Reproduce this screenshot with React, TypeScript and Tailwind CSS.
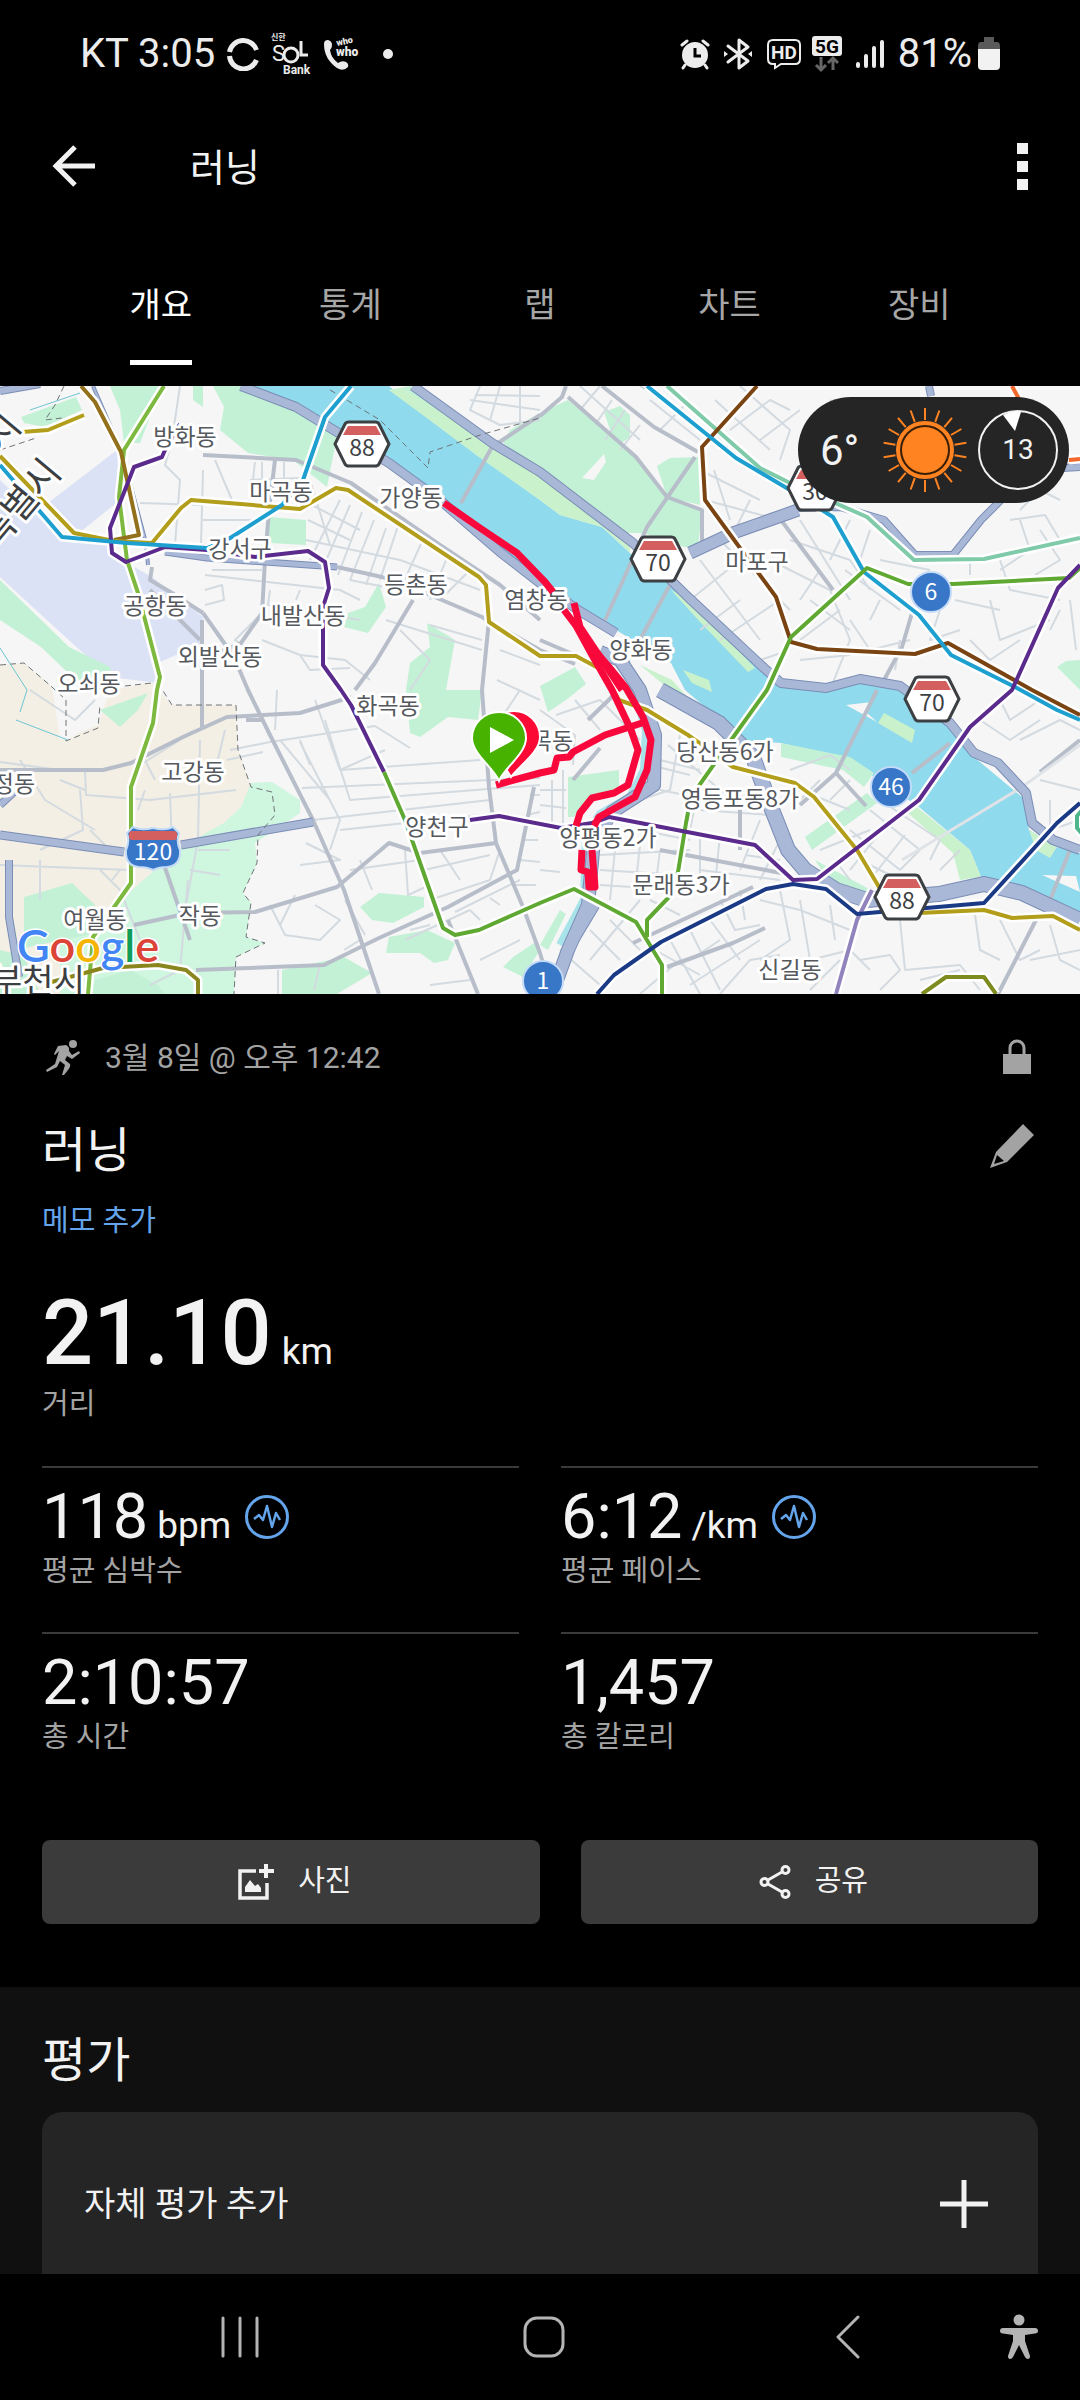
import type { ReactNode } from "react"

const tabs = ["개요", "통계", "랩", "차트", "장비"]

const stats = [
  { value: "118", unit: "bpm", label: "평균 심박수", chart: true },
  { value: "6:12", unit: "/km", label: "평균 페이스", chart: true },
  { value: "2:10:57", label: "총 시간" },
  { value: "1,457", label: "총 칼로리" },
]

const parks = [
  "110,386 162,386 140,443 124,443 120,410",
  "213,386 245,386 295,410 337,436 327,487 293,460 248,453 220,430 224,407",
  "193,386 203,386 203,407 193,400",
  "269,517 306,520 306,545 269,543",
  "379,583 386,607 368,633 344,627 348,613 365,607",
  "427,623 455,640 446,690 482,690 478,720 448,717 420,737 410,733 406,690 410,663 430,647",
  "0,580 69,647 110,667 117,690 86,690 41,647 0,620",
  "21,417 76,397 82,410 45,427 24,423",
  "389,390 410,386 500,445 540,468 540,500 480,458 430,420",
  "510,430 540,413 568,400 636,457 667,497 702,510 698,547 684,547 643,533 619,533 540,472 503,443",
  "604,412 620,406 630,415 630,437 616,447",
  "657,466 670,458 698,457 700,505 667,497",
  "1057,667 1066,661 1080,660 1080,690",
  "540,686 575,667 586,684 566,700 548,712",
  "568,777 619,770 619,787 585,803 574,817 568,817",
  "781,743 850,757 874,773 864,787 843,770 781,757",
  "805,837 867,793 877,803 812,850",
  "815,860 871,890 864,897 826,877",
  "24,897 72,883 95,905 112,930 24,948",
  "100,710 148,693 138,710 120,727",
  "93,994 95,980 130,970 158,985 165,994",
  "360,907 379,893 424,897 424,907 393,923 372,920",
  "389,937 427,930 455,943 448,960 434,963 420,953 386,953",
  "282,970 344,957 372,973 337,994 282,994",
  "513,957 534,943 540,950 523,977 503,967",
  "0,950 24,956 40,994 0,994",
  "540,945 560,910 566,914 548,950",
]

const expressways = [
  { w: 10, d: "M241 386L296 407L337 432L389 463L440 500L500 552L540 583L578 610L616 633" },
  { w: 14, d: "M600 652L620 660L640 690L655 735L654 785L612 812L594 840L588 905L568 950L552 994" },
  { w: 9, d: "M596 905L572 945" },
  { w: 10, d: "M413 386L492 443L540 472L633 543L688 597L764 668L781 683L826 688L860 679L900 686L950 723L974 753L998 763L1026 793L1032 823L1053 840L1080 850" },
  { w: 16, d: "M660 690L719 723L753 757L771 807L788 850L805 870L836 890L867 900L939 894L984 884L1022 893L1080 920" },
  { w: 13, d: "M690 553L733 533L798 510" },
  { w: 8, d: "M798 508L840 507L884 520L915 555L953 555L981 520L998 503L1030 470L1080 467" },
  { w: 9, d: "M0 835L124 852M181 845L313 822" },
  { w: 8, d: "M9 860L9 917L19 977M0 805L14 792" },
  { w: 4, d: "M93 386L122 453L146 543L148 565" },
  { w: 7, d: "M165 552L207 558L265 562L337 567" },
  { w: 8, d: "M929 386L931 396M0 391L40 384" },
]

const avenues = [
  "M203 455L296 460L351 483L440 545L500 585L540 620",
  "M275 460L269 510L265 560L262 613L241 643L220 652",
  "M203 613L234 657L248 690L269 733L313 820L344 890L379 994",
  "M202 620L202 727",
  "M152 567L150 580L172 593L203 613M150 590L200 640",
  "M337 567L382 577L430 595L482 617L540 650L575 664",
  "M413 600L375 663L355 690",
  "M489 620L482 690L489 787L496 843L523 907L540 953L552 994",
  "M0 770L103 770L131 763L183 737L227 717L300 713L351 697",
  "M134 925L189 913L255 912L337 887L389 843L420 853L496 843",
  "M196 970L324 965L379 938L448 907L517 870L534 787",
  "M448 920L478 994",
  "M540 416L562 397L566 386M568 397L636 457L667 497L702 510L702 545",
  "M602 386L654 427L698 452",
  "M695 457L647 527L602 627M671 583L636 647",
  "M540 415L492 447L461 503",
  "M781 520L833 590",
  "M877 690L836 773L800 805M836 773L866 806M912 613L902 647L884 680",
  "M950 743L912 773",
  "M660 850L781 873",
  "M633 943L753 887M667 967L733 943L765 928",
  "M998 994L1036 920M740 807L740 850",
  "M540 640L575 655M573 780L600 748M619 690L588 720",
  "M1080 740L1040 772M1070 850L1050 900",
  "M190 940L152 830M262 720L246 720",
]

const streets = [
  "M203 470L201 545L230 540M180 386L172 440L165 465L180 480L175 545",
  "M215 460L232 500L200 500M255 462L250 505M262 462L262 500M284 462L284 500M250 480L300 478",
  "M203 520L262 520M140 503L203 505M310 480L330 545M340 500L310 560M350 505L322 570M362 512L338 575M374 520L350 580M386 528L366 585",
  "M312 505L360 530M308 520L350 540M306 540L400 560L480 590M400 520L380 580M425 535L400 590L350 580M450 550L430 600M470 570L440 600",
  "M205 590L222 585L224 600L205 605M205 575L340 590L360 600M270 590L268 605L360 620M300 590L296 600M212 570L262 570",
  "M262 613L235 640L250 650M277 690L275 730M262 640L300 655L345 660L370 680M300 655L310 670L350 668",
  "M400 630L430 660L410 690M430 625L482 640M386 620L482 650M500 650L540 665M497 680L540 700M520 690L500 720",
  "M230 750L270 742L375 726L410 748M227 760L263 752M300 742L340 820L330 850M280 740L330 800M315 700L340 770L480 760M325 720L350 800L540 785",
  "M302 788L540 778M313 820L490 800M340 830L480 815M350 870L420 860M385 750L340 770M310 765L300 740M306 843L340 860L300 865",
  "M270 905L285 935L320 940L340 920L315 905M295 895L280 925M345 900L365 935M344 950L360 940M320 965L314 990M278 970L278 994",
  "M372 890L360 860M405 850L408 895L430 885L420 862M424 870L490 855M440 850L460 880M430 900L490 880L500 850",
  "M470 910L480 920M490 898L500 905M455 912L520 880M405 940L470 910M410 930L430 925M480 960L520 940M430 985L470 980",
  "M515 885L536 885M520 860L540 862M522 840L538 840M526 815L540 812M530 795L540 795M540 870L560 872",
  "M0 865L130 870M40 860L40 900M80 790L83 830L40 850M85 770L86 795L150 800L236 790M60 780L85 790M170 793L172 850M200 740L198 840L185 910",
  "M198 850L230 850M190 870L220 875M188 880L180 970L150 985M155 780L145 760M145 790L138 810M180 740L140 765M213 780L225 730",
  "M100 870L120 890L140 940M120 870L112 880M110 850L90 830M20 760L45 800L95 830M0 762L60 770M30 690L75 720L95 700",
  "M580 386L640 440M600 386L580 410M625 410L605 440M640 425L620 450M612 400L595 425M650 400L700 440M640 386L700 425L720 440",
  "M670 386L730 450M690 400L660 430M715 400L770 450M740 386L790 430L780 460M730 430L770 400L790 410M760 440L800 410M700 470L760 500",
  "M714 470L730 520M720 450L780 480M705 500L780 520M750 500L735 530M830 400L850 420M800 440L810 460",
  "M690 600L740 560L780 600L720 640M700 560L760 640M720 540L790 610M740 600L700 630M770 560L830 590L850 640L830 690M790 540L850 560L870 590",
  "M800 520L850 600M820 570L800 600M850 520L830 560M870 530L860 560M840 610L800 640M760 660L790 650M810 600L850 630",
  "M850 620L870 650L910 640M880 600L870 620M940 610L930 640L960 630M990 600L1000 640L1050 620M1000 560L1010 590L1060 600M1020 520L1030 550L1000 570",
  "M1040 530L1060 560L1035 575M1010 520L1045 515L1060 540M1060 500L1040 490L1020 510M900 640L895 670M1020 640L990 660L970 640M1060 610L1050 630",
  "M845 570L900 610M880 560L930 570M800 660L850 655M970 560L970 575M955 600L1000 610M1070 600L1076 650",
  "M540 710L575 735L573 765M556 715L600 700L640 740M545 740L555 750M575 700L600 730M540 790L566 790M552 780L552 830M563 770L563 830M540 805L566 808",
  "M655 720L660 760L700 770M680 735L670 790L640 800M668 745L720 790M700 780L690 830M650 765L690 775M660 790L685 795M640 830L690 840",
  "M600 855L690 850M600 870L680 875M615 850L610 900M640 845L635 890M660 850L655 890M600 885L680 890M700 830L700 880M720 835L715 885M680 855L770 870",
  "M700 810L770 815M710 790L760 800M760 820L740 870M780 840L760 880M745 855L780 860M700 870L780 880",
  "M790 770L830 755L850 770M800 790L850 810M820 780L800 800M850 780L830 800M820 850L870 830M850 830L900 870M870 810L920 850",
  "M890 820L850 870M905 835L870 880M920 850L900 870M860 860L900 880M880 800L940 840L930 860M835 860L850 880M960 850L940 870",
  "M590 960L640 900M600 985L560 950M620 960L590 930M640 950L610 920M670 940L700 994M690 930L720 990M710 920L740 960M640 994L680 960",
  "M690 960L720 940M720 994L750 960L780 955M680 915L650 900M720 900L735 930L760 925M740 890L745 920M690 985L760 940M655 950L700 975",
  "M760 900L800 910L850 930M780 890L790 940L760 960M800 900L810 960L850 950L870 970M830 905L835 940M860 960L890 955L900 970L880 990",
  "M900 920L905 970L960 965L980 990M975 915L980 950L1000 960M1000 920L1020 960L1040 950M1050 925L1060 960L1080 970M920 980L960 970M1030 960L1080 950M840 960L810 990",
  "M1000 700L1010 720L1040 700M1020 740L1060 720L1080 730M1040 780L1080 790M1050 800L1050 830L1080 820M980 720L1010 740L1040 720",
  "M470 400L540 410M480 386L470 410L500 425L540 420M500 386L490 420M520 386L520 425M475 395L540 396",
]

const transit = [
  { c: "#7db93f", d: "M164 386L124 450L119 497L127 560L138 593L160 677L157 690L153 723L131 787L131 883L110 913L93 937L88 994" },
  { c: "#93701b", d: "M81 386L95 402L121 452L139 535L114 540" },
  { c: "#b29e1a", d: "M22 432L48 430L84 415" },
  { c: "#b29e1a", d: "M0 456L74 533L114 541L152 543L181 508L191 500L300 509L336 488L348 490L479 577L486 585L489 622L540 656L576 656L602 670L619 700L647 710L688 735L733 767L795 783L814 797L857 850L879 887L919 913L984 910L1012 918L1053 916L1080 930" },
  { c: "#5a2b8c", d: "M180 424L165 450L162 457L134 467L110 528L112 553L126 562L165 547L207 550L255 557L308 551L325 562L329 588L323 607L323 665L341 690L351 705L384 772" },
  { c: "#1d9fd0", d: "M0 465L62 537L127 543L207 548L227 540L282 505L303 480L325 417L351 386" },
  { c: "#7fcaa8", d: "M667 386L760 468L790 483L867 517L914 560L984 559L1080 538" },
  { c: "#7a4412", d: "M757 386L702 447L705 500L740 548L776 597L791 642L817 649L915 654L948 643L1032 690L1080 715" },
  { c: "#1d9fd0", d: "M647 386L736 458L790 490L833 517L864 572L919 615L951 655L1015 687L1057 710L1080 720" },
  { c: "#5fa832", d: "M384 772L405 820L443 928L455 935L479 930L540 903L574 889L636 922L662 965L662 994" },
  { c: "#5fa832", d: "M1080 568L1069 578L953 584L908 584L867 568L791 637L767 690L729 743L691 797L686 823L678 872L669 897L647 920L647 937" },
  { c: "#5a2b8c", d: "M470 820L499 816L561 828L592 823L609 817L755 845L793 880L817 879L919 800L970 727L1012 690L1058 588L1080 565" },
  { c: "#9184bd", d: "M872 890L857 920L836 994" },
  { c: "#1b3a86", d: "M597 994L614 975L661 942L766 889L793 884L826 889L857 914L984 903L1057 823L1080 803" },
  { c: "#7d8b1f", d: "M922 994L946 977L984 977L996 994" },
  { c: "#8a861e", d: "M48 983L103 968L158 965L186 970L198 980L198 994" },
  { c: "#f0682a", d: "M1012 386L1019 399M1069 460L1080 459" },
  { c: "#4fb58a", d: "M1084 808L1077 816L1077 828L1084 836" },
]

const places = [
  { x: 185, y: 437, name: "방화동" },
  { x: 281, y: 492, name: "마곡동" },
  { x: 411, y: 498, name: "가양동" },
  { x: 240, y: 549, name: "강서구" },
  { x: 416, y: 585, name: "등촌동" },
  { x: 536, y: 600, name: "염창동" },
  { x: 155, y: 606, name: "공항동" },
  { x: 303, y: 616, name: "내발산동" },
  { x: 220, y: 657, name: "외발산동" },
  { x: 89, y: 684, name: "오쇠동" },
  { x: 388, y: 706, name: "화곡동" },
  { x: 193, y: 772, name: "고강동" },
  { x: 14, y: 784, name: "정동" },
  { x: 200, y: 916, name: "작동" },
  { x: 95, y: 920, name: "여월동" },
  { x: 437, y: 827, name: "양천구" },
  { x: 552, y: 741, name: "목동" },
  { x: 641, y: 650, name: "양화동" },
  { x: 757, y: 562, name: "마포구" },
  { x: 725, y: 752, name: "당산동6가" },
  { x: 740, y: 799, name: "영등포동8가" },
  { x: 608, y: 838, name: "양평동2가" },
  { x: 681, y: 885, name: "문래동3가" },
  { x: 790, y: 970, name: "신길동" },
]

const routeShields = [
  { x: 362, y: 444, n: "88" },
  { x: 658, y: 559, n: "70" },
  { x: 815, y: 488, n: "30" },
  { x: 932, y: 699, n: "70" },
  { x: 902, y: 897, n: "88" },
]

const roundShields = [
  { x: 931, y: 592, n: "6" },
  { x: 891, y: 787, n: "46" },
  { x: 543, y: 981, n: "1" },
]

function RouteMap() {
  return (
    <svg
      viewBox="0 386 1080 608"
      className="block w-full font-['Noto_Sans_CJK_KR',sans-serif]"
      role="img"
      aria-label="러닝 경로 지도"
    >
      <rect y="386" width="1080" height="608" fill="#f6f6f6" />
      <path d="M0 665L24 663L52 687L60 740L98 725L110 690L152 683L172 705L236 705L238 750L251 787L250 830L180 994H0Z" fill="#f4efe4" />
      <path d="M52 690L98 702L96 722L66 741L60 712Z" fill="#f6f6f6" />
      <path d="M0 480L62 540L107 543L127 563L152 577L203 617L203 643L158 663L158 683L110 677L72 643L0 577ZM117 450L120 500L79 533L48 503Z" fill="#dbe2f5" />
      <path
        d="M251 783L272 782L300 800L300 813L275 830L255 843L257 863L243 893L251 903L246 937L265 943L236 957L234 994H60L60 945L120 900L155 870L193 840L224 823L241 807Z"
        fill="#cff6df"
      />

      {/* Han river and the Anyang stream */}
      <path
        d="M254 386L389 386L430 420L480 457L540 500L560 515L602 527L630 553L688 597L753 663L781 683L826 688L860 679L905 690L953 730L974 757L1022 797L1029 830L1057 847L1080 853L1080 917L1022 893L981 877L970 850L919 807L874 777L850 760L781 743L733 740L712 713L685 690L671 663L616 630L574 607L540 580L480 532L420 484L331 426Z"
        fill="#8fdaec"
      />
      <path d="M620 640L634 690L646 730L644 770L630 797L600 814L586 835L584 900L560 945" fill="none" stroke="#a9e3ea" strokeWidth="8" />
      {parks.map((points) => (
        <polygon key={points} points={points} fill="#c3f1d6" />
      ))}
      <g fill="#c9f1cc">
        <path d="M671 590L690 600L755 668L748 672L700 622ZM683 670L709 680L712 692L692 683ZM884 713L915 730L912 743L878 723ZM640 665L672 680L690 700L670 690Z" />
        <path d="M912 803L970 850L981 877L960 880L953 853L908 813ZM389 390L402 388L540 476V500L470 450ZM540 476L560 490L630 545L630 553L602 527L560 515L540 500ZM1029 830L1057 847L1050 858L1036 850Z" />
      </g>
      <path d="M846 705L872 702L866 712L877 722ZM1042 875L1076 876L1080 892ZM582 478L604 454L606 462L594 480Z" fill="#f6f6f6" />

      <g fill="none" strokeLinejoin="round">
        <g stroke="#d3dae0" strokeWidth="2">
          {streets.map((d) => (
            <path key={d} d={d} />
          ))}
        </g>
        <g stroke="#b7beca" strokeWidth="4">
          {avenues.map((d) => (
            <path key={d} d={d} />
          ))}
        </g>
        <path d="M1080 745L1022 787L902 860" stroke="#dfe3e8" strokeWidth="3" />
        <g stroke="#7b8db5">
          {expressways.map(({ w, d }) => (
            <path key={d} d={d} strokeWidth={w} />
          ))}
        </g>
        <g stroke="#a9b8d7">
          {expressways.map(({ w, d }) => (
            <path key={d} d={d} strokeWidth={w - 2} />
          ))}
        </g>
        <g stroke="#6f7478" strokeWidth="1" strokeDasharray="6 4">
          <path d="M330 390L380 420L428 468L430 452L480 435L540 418M0 665L24 663L52 687L66 700L66 741L98 728L100 705" />
          <path d="M158 683L172 705L236 705L238 750L251 787L272 792L275 815L258 835L257 863L243 893L251 903L246 937L265 943L236 957L234 994" />
          <path d="M64 386L55 405L45 420L62 418M0 450L36 438M125 686L152 683" />
        </g>
        <path d="M30 410L80 393M0 648L27 690L20 712M16 720L68 740" stroke="#6cc5d3" strokeWidth="1" />
        <g stroke="#ffffff" strokeWidth="9">
          {transit.map(({ d }) => (
            <path key={d} d={d} />
          ))}
        </g>
        {transit.map(({ c, d }) => (
          <path key={d} d={d} stroke={c} strokeWidth="4" />
        ))}
      </g>

      {/* labels */}
      <g fontSize="23" textAnchor="middle" fill="#55595d" stroke="#ffffff" strokeWidth="6" strokeLinejoin="round" paintOrder="stroke">
        {places.map(({ x, y, name }) => (
          <text key={name} x={x} y={y + 8}>
            {name}
          </text>
        ))}
        <g fontSize="34" fill="#3c3f42">
          <text x="38" y="993">부천시</text>
          <text transform="translate(30 512) rotate(-50)" fontSize="37">특별시</text>
          <text transform="translate(12 440) rotate(-50)" fontSize="37">시</text>
        </g>
      </g>

      {/* recorded track */}
      <g fill="none" stroke="#f9083c" strokeWidth="7" strokeLinejoin="round">
        <path d="M444 503L480 528L517 553L545 582L553 592" />
        <path d="M564 610L592 647L609 667L626 688L643 717L651 740L647 770L635 797L599 817L594 826M592 850L595 887L589 887L588 872L581 870L582 850M576 826L580 813L592 798L614 793L628 785L638 750L631 730L612 690L592 655L574 622" />
        <path d="M574 603L580 627L602 660L622 690" />
        <path d="M642 723L605 735L573 752L569 757L557 758L554 770L540 773L496 785" />
      </g>

      {routeShields.map(({ x, y, n }) => (
        <g key={`${x}-${n}`} transform={`translate(${x} ${y})`}>
          <path d="M-27 0L-17 -20Q-16 -22 -13 -22H13Q16 -22 17 -20L27 0L17 20Q16 22 13 22H-13Q-16 22 -17 20Z" fill="#ffffff" stroke="#3d4043" strokeWidth="3" />
          <path d="M-14 -18H14L19 -9H-19Z" fill="#d45f5f" />
          <text y="12" fontSize="23" textAnchor="middle" fill="#3d4043">
            {n}
          </text>
        </g>
      ))}
      {roundShields.map(({ x, y, n }) => (
        <g key={n}>
          <circle cx={x} cy={y} r="20" fill="#3876c8" stroke="#c4dbf8" strokeWidth="2" />
          <text x={x} y={y + 8} fontSize="23" textAnchor="middle" fill="#ffffff">
            {n}
          </text>
        </g>
      ))}
      <g transform="translate(153 848)">
        <path
          d="M-20 -21Q-12 -17 0 -20Q12 -17 20 -21L26 -15Q23 -7 27 2Q28 18 14 19Q6 19 0 22Q-6 19 -14 19Q-28 18 -27 2Q-23 -7 -26 -15Z"
          fill="#3876c8"
          stroke="#c4dbf8"
          strokeWidth="2"
        />
        <rect x="-24" y="-17" width="48" height="9" rx="3" fill="#d45f5f" />
        <text y="12" fontSize="23" textAnchor="middle" fill="#ffffff">
          120
        </text>
      </g>

      {/* finish and start pins */}
      <path d="M511 777C505 765 488 752 488 737A26 26 0 0 1 540 737C540 752 520 765 511 777Z" fill="#fb0a35" stroke="#ffffff" strokeWidth="2" />
      <path d="M499 781C494 768 472 754 472 738A27 26 0 0 1 526 738C526 754 504 768 499 781Z" fill="#47b200" stroke="#ffffff" strokeWidth="2" />
      <path d="M490 727L514 740L490 753Z" fill="#ffffff" />

      <text x="17" y="962" fontSize="45" fontWeight="600" stroke="#ffffff" strokeWidth="3" paintOrder="stroke" className="font-['Lato',sans-serif]">
        <tspan fill="#4285f4">G</tspan>
        <tspan fill="#db4437">o</tspan>
        <tspan fill="#f4b400">o</tspan>
        <tspan fill="#4285f4">g</tspan>
        <tspan fill="#0f9d58">l</tspan>
        <tspan fill="#db4437">e</tspan>
      </text>
    </svg>
  )
}

const rays = Array.from({ length: 18 }, (_, i) => i * 20)

function WeatherBadge() {
  return (
    <div className="absolute top-[11px] right-[11px] flex h-[106px] w-[271px] items-center rounded-full bg-[#252525] pr-[11px] pl-[22px] text-[#f2f2f2]">
      <span className="text-[42px]">6°</span>
      <svg viewBox="-42 -42 84 84" className="mr-[11px] ml-auto size-[84px]" aria-hidden="true">
        <g stroke="#ff8421" strokeWidth="2">
          {rays.map((angle) => (
            <path key={angle} d="M0 -30V-42" transform={`rotate(${angle})`} />
          ))}
        </g>
        <circle r="27" fill="#3a1f08" stroke="#ff8421" strokeWidth="4" />
        <circle r="23" fill="#ff8421" />
      </svg>
      <div className="relative flex size-20 items-center justify-center">
        <svg viewBox="0 0 80 80" className="absolute inset-0" aria-hidden="true">
          <circle cx="40" cy="40" r="39" fill="none" stroke="#f2f2f2" strokeWidth="2" />
          <path d="M25 5Q34 0 43 2L37 21Z" fill="#ffffff" />
        </svg>
        <span className="text-[28px]">13</span>
      </div>
    </div>
  )
}

function StatusBar() {
  return (
    <header className="flex h-[108px] items-center justify-between px-20 text-[40px] text-[#ececec]">
      <div className="flex items-center gap-3">
        <span>KT 3:05</span>
        <svg viewBox="0 0 32 34" className="h-[34px] w-8" fill="none" stroke="currentColor" strokeWidth="5" aria-hidden="true">
          <path d="M2.5 15A14 14 0 0 1 29.500 13M2.500 19A14 14 0 0 0 29.500 23" />
        </svg>
        <svg viewBox="0 0 44 46" className="-mr-1 h-[46px] w-11" aria-label="신한 SOL Bank">
          <g fill="currentColor">
            <text x="0" y="9" fontSize="8" fontWeight="700" className="font-['Noto_Sans_CJK_KR',sans-serif]">신한</text>
            <text x="1" y="30" fontSize="22">S</text>
            <text x="12" y="43" fontSize="12" fontWeight="700">Bank</text>
          </g>
          <circle cx="20" cy="24" r="7" fill="none" stroke="currentColor" strokeWidth="3" />
          <path d="M30 10V24H37" fill="none" stroke="currentColor" strokeWidth="3" />
        </svg>
        <svg viewBox="0 0 40 36" className="h-9 w-10" aria-label="whowho">
          <path d="M1 8Q1 4 5 4Q9 5 9 9Q9 12 7 14Q8 22 15 27Q19 24 23 26Q26 28 25 31Q20 36 14 32Q1 23 1 8Z" fill="currentColor" />
          <g fill="currentColor" fontWeight="900">
            <text transform="translate(14 10) rotate(-12)" fontSize="9">who</text>
            <text x="13" y="20" fontSize="12">who</text>
          </g>
        </svg>
        <span className="ml-2 size-[10px] rounded-full bg-current" />
      </div>
      <div className="flex items-center gap-[14px]">
        <svg viewBox="0 0 30 32" className="h-8 w-[30px]" aria-label="알람">
          <circle cx="15" cy="17" r="13" fill="currentColor" />
          <path d="M2 7L7 3M28 7L23 3M5 27L3 30M25 27L27 30" stroke="currentColor" strokeWidth="3" strokeLinecap="round" />
          <path d="M15 10V18H21" fill="none" stroke="#000" strokeWidth="3" />
        </svg>
        <svg viewBox="0 0 28 34" className="h-[34px] w-7" fill="none" stroke="currentColor" strokeWidth="3" strokeLinejoin="round" aria-label="블루투스">
          <path d="M4 9L24 24L15 31V3L24 10L4 25" strokeLinecap="round" />
          <path d="M0 14L4 17L0 20ZM28 14L24 17L28 20Z" fill="currentColor" stroke="none" />
        </svg>
        <svg viewBox="0 0 36 32" className="h-8 w-9" aria-label="HD 통화">
          <path d="M7 2H29Q34 2 34 7V21Q34 26 29 26H15L9 30V26H7Q2 26 2 21V7Q2 2 7 2Z" fill="none" stroke="currentColor" strokeWidth="2" />
          <text x="18" y="21" fontSize="19" fontWeight="700" textAnchor="middle" fill="currentColor">HD</text>
        </svg>
        <svg viewBox="0 0 30 38" className="-ml-1 h-[38px] w-[30px]" aria-label="5G">
          <rect y="1" width="30" height="20" rx="3" fill="currentColor" />
          <text x="15" y="18" fontSize="19" fontWeight="700" textAnchor="middle" fill="#000">5G</text>
          <path d="M9 22V34M4 30L9 35L14 30M21 35V24M16 28L21 23L26 28" fill="none" stroke="#666" strokeWidth="3" />
        </svg>
        <svg viewBox="0 0 28 30" className="h-[30px] w-7" stroke="currentColor" strokeWidth="4" strokeLinecap="round" aria-label="신호 세기">
          <path d="M2 25V27M10 17V27M18 9V27M26 3V27" />
        </svg>
        <div className="flex items-center gap-[6px]">
          <span>81%</span>
          <svg viewBox="0 0 22 34" className="h-[34px] w-[22px]" aria-label="배터리">
            <path d="M6 0H16V5H19Q22 5 22 9V14H0V9Q0 5 3 5H6Z" fill="#5a5a5a" />
            <path d="M0 12H22V29Q22 33 18 33H4Q0 33 0 29Z" fill="#f2f2f2" />
          </svg>
        </div>
      </div>
    </header>
  )
}

function ChartIcon() {
  return (
    <svg viewBox="0 0 44 44" className="ml-[14px] size-11" fill="none" stroke="#64a4ea" strokeLinejoin="round" aria-hidden="true">
      <circle cx="22" cy="22" r="20.500" strokeWidth="3" />
      <path d="M9 24L14 20L18 25L22 11L27 32L31 18L35 25" strokeWidth="2.500" />
    </svg>
  )
}

function ActionButton({ icon, label, className }: { icon: ReactNode; label: string; className: string }) {
  return (
    <button className={`flex h-[84px] items-center justify-center gap-6 rounded-lg bg-[#3b3b3b] pl-2 text-[29px] ${className}`}>
      {icon}
      {label}
    </button>
  )
}

export default function App() {
  return (
    <div lang="ko" className="min-h-screen bg-black font-['Roboto','Noto_Sans_CJK_KR',sans-serif] text-[#f2f2f2]">
      <StatusBar />

      <div className="flex h-[116px] items-center pr-[52px] pl-[52px]">
        <button aria-label="뒤로">
          <svg viewBox="0 0 44 42" className="h-[42px] w-11" fill="none" stroke="currentColor" strokeWidth="5" aria-hidden="true">
            <path d="M43 21H5M23 2L4 21L23 40" />
          </svg>
        </button>
        <h1 className="ml-[94px] pt-1 text-[38px]">러닝</h1>
        <button className="ml-auto flex flex-col gap-[7px]" aria-label="메뉴">
          <span className="size-[11px] bg-current" />
          <span className="size-[11px] bg-current" />
          <span className="size-[11px] bg-current" />
        </button>
      </div>

      <nav className="grid h-[162px] grid-cols-5 px-[66px]">
        {tabs.map((tab, index) => (
          <button
            key={tab}
            className={`flex flex-col items-center pt-[54px] text-[34px] leading-[54px] ${index === 0 ? "text-white" : "text-[#a6a6a6]"}`}
          >
            {tab}
            {index === 0 && <span className="mt-7 h-[5px] w-[62px] bg-white" />}
          </button>
        ))}
      </nav>

      <section className="relative">
        <RouteMap />
        <WeatherBadge />
      </section>

      <main className="px-[42px]">
        <div className="flex h-[126px] items-center text-[30px] text-[#a3a3a3]">
          <svg viewBox="0 0 34 36" className="ml-1 h-9 w-[34px]" aria-hidden="true">
            <circle cx="27" cy="5" r="4" fill="currentColor" />
            <path d="M12 7L20 6Q24 8 23 12L26 16L33 12L34 14L26 20L21 17L19 21L24 25Q25 27 22 31L18 36H16L19 26L14 22L11 28L1 33L0 31L9 25L13 12L9 16L8 15Z" fill="currentColor" />
          </svg>
          <span className="ml-[25px]">3월 8일 @ 오후 12:42</span>
          <svg viewBox="0 0 28 36" className="mr-[7px] ml-auto h-9 w-7" aria-label="비공개">
            <path d="M0 15H28V35H0Z" fill="currentColor" />
            <path d="M7 16V9A7 7 0 0 1 21 9V16" fill="none" stroke="currentColor" strokeWidth="3" />
          </svg>
        </div>

        <div className="flex h-[62px] items-center justify-between">
          <h2 className="text-[48px]">러닝</h2>
          <button aria-label="이름 편집" className="mt-1 mr-1 self-start text-[#a3a3a3]">
            <svg viewBox="0 0 44 44" className="size-11" aria-hidden="true">
              <path fillRule="evenodd" d="M33 0L44 11L17 38L0 44L6 28ZM7 31L4 40L14 37Z" fill="currentColor" />
            </svg>
          </button>
        </div>
        <a href="#memo" className="mt-4 block text-[29px] leading-[46px] text-[#64a4ea]">
          메모 추가
        </a>

        <div className="mt-[45px] flex items-baseline gap-[10px] text-[90px] leading-[90px] font-medium">
          21.10
          <span className="text-[37px] leading-none font-normal">km</span>
        </div>
        <p className="mt-1 text-[29px] leading-[42px] text-[#a3a3a3]">거리</p>

        <div className="mt-[41px] grid grid-cols-2 gap-x-[42px]">
          {stats.map(({ value, unit, label, chart }) => (
            <div key={label} className="h-[166px] border-t-2 border-[#3a3a3a] pt-4">
              <div className="flex h-[66px] items-center">
                <p className="flex items-baseline gap-[9px] text-[63px] leading-[66px]">
                  {value}
                  {unit && <span className="text-[37px] leading-none">{unit}</span>}
                </p>
                {chart && <ChartIcon />}
              </div>
              <p className="text-[29px] leading-[42px] text-[#a3a3a3]">{label}</p>
            </div>
          ))}
        </div>

        <div className="mt-[42px] flex gap-[41px]">
          <ActionButton
            label="사진"
            className="flex-[498]"
            icon={
              <svg viewBox="0 0 36 36" className="size-9" fill="none" stroke="currentColor" aria-hidden="true">
                <path d="M18 7H2V34H29V19" strokeWidth="3.500" />
                <path d="M28 0V14M21 7H36" strokeWidth="4" />
                <path d="M7 28V23L12 16L17 22L20 20L23 24V28Z" fill="currentColor" stroke="none" />
              </svg>
            }
          />
          <ActionButton
            label="공유"
            className="flex-[457]"
            icon={
              <svg viewBox="0 0 32 36" className="h-9 w-8" fill="none" stroke="currentColor" strokeWidth="3" aria-hidden="true">
                <path d="M9 16L23 8M9 20L23 28" />
                <circle cx="5.500" cy="18" r="3.500" />
                <circle cx="26.500" cy="6" r="3.500" />
                <circle cx="26.500" cy="30" r="3.500" />
              </svg>
            }
          />
        </div>
      </main>

      <section className="mt-[63px] bg-[#101010] px-[42px] pt-[38px]">
        <h2 className="text-[48px] leading-[72px]">평가</h2>
        <button className="mt-[15px] flex h-[162px] w-full items-center justify-between rounded-t-[20px] bg-[#252525] pt-[22px] pr-[50px] pl-[42px] text-[34px]">
          자체 평가 추가
          <svg viewBox="0 0 48 48" className="size-12" stroke="currentColor" strokeWidth="5" aria-hidden="true">
            <path d="M24 0V48M0 24H48" />
          </svg>
        </button>
      </section>

      <footer className="flex h-[126px] items-center bg-black pr-[42px] pl-[88px] text-[#b4b4b4]">
        <button className="flex flex-1 justify-center" aria-label="최근 앱">
          <svg viewBox="0 0 40 42" className="h-[42px] w-10" stroke="currentColor" strokeWidth="3" strokeLinecap="round">
            <path d="M3 2V40M20 2V40M37 2V40" />
          </svg>
        </button>
        <button className="flex flex-1 justify-center" aria-label="홈">
          <svg viewBox="0 0 42 42" className="size-[42px]" fill="none" stroke="currentColor" strokeWidth="3">
            <rect x="2" y="2" width="38" height="38" rx="12" />
          </svg>
        </button>
        <button className="flex flex-1 justify-center" aria-label="이전">
          <svg viewBox="0 0 24 44" className="h-11 w-6" fill="none" stroke="currentColor" strokeWidth="3" strokeLinecap="round" strokeLinejoin="round">
            <path d="M22 2L2 22L22 42" />
          </svg>
        </button>
        <button className="w-[38px]" aria-label="접근성">
          <svg viewBox="0 0 38 46" className="h-[46px] w-[38px]" fill="currentColor">
            <circle cx="19" cy="6" r="5.500" />
            <path d="M3 14H35Q38 14 38 17Q38 19 35 19.500L25 21V27L30 42Q30 45 28 45Q26 45 25 43L19 31L13 43Q12 45 10 45Q8 45 8 42L13 27V21L3 19.500Q0 19 0 17Q0 14 3 14Z" />
          </svg>
        </button>
      </footer>
    </div>
  )
}
